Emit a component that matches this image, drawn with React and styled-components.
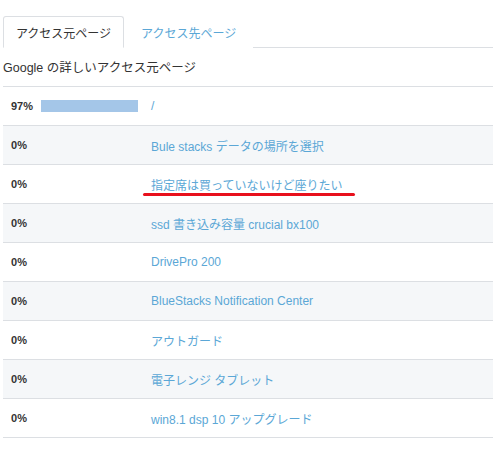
import React from "react";
import styled, { createGlobalStyle } from "styled-components";

const Global = createGlobalStyle`
  html, body { margin: 0; padding: 0; background: #fff; }
  body { font-family: "Liberation Sans", Arial, "Noto Sans CJK JP", sans-serif; color: #333; }
`;

const Page = styled.div`
  padding: 16px 0 0 3px;
`;

const Tabs = styled.div`
  display: flex;
  border-bottom: 1px solid #dcdfe3;
  height: 31px;
`;

const Tab = styled.div`
  box-sizing: border-box;
  height: 32px;
  padding: 0 ${p => (p.$active ? 0 : 16)}px;
  width: ${p => (p.$active ? "121px" : "auto")};
  display: flex;
  align-items: center;
  justify-content: center;
  white-space: nowrap;
  font-size: 12px;
  color: ${p => (p.$active ? "#333" : "#5ba7d6")};
  background: #fff;
  border: 1px solid ${p => (p.$active ? "#dcdfe3" : "transparent")};
  border-bottom-color: ${p => (p.$active ? "#fff" : "transparent")};
  border-radius: 3px 3px 0 0;
  margin-bottom: -1px;
`;

const Heading = styled.div`
  font-size: 12.5px;
  color: #333;
  height: 38px;
  line-height: 40px;
  border-bottom: 1px solid #dcdfe3;
`;

const Row = styled.div`
  position: relative;
  display: flex;
  align-items: center;
  height: 38px;
  border-bottom: 1px solid #dcdfe3;
  background: ${p => (p.$alt ? "#f5f7f9" : "#fff")};
`;

const Pct = styled.div`
  width: 38px;
  padding-left: 8px;
  box-sizing: border-box;
  font-size: 11px;
  font-weight: bold;
  color: #333;
`;

const BarCell = styled.div`
  width: 110px;
  height: 12px;
`;

const Bar = styled.div`
  height: 12px;
  background: #a4c6e8;
`;

const Link = styled.a`
  font-size: 12px;
  color: #5ba7d6;
  text-decoration: none;
`;

const Underline = styled.div`
  position: absolute;
  left: 140px;
  bottom: 7px;
  width: 212px;
  height: 3px;
  border-radius: 2px;
  background: #e8101c;
`;

const rows = [
  { pct: 97, text: "/" },
  { pct: 0, text: "Bule stacks データの場所を選択" },
  { pct: 0, text: "指定席は買っていないけど座りたい", mark: true },
  { pct: 0, text: "ssd 書き込み容量 crucial bx100" },
  { pct: 0, text: "DrivePro 200" },
  { pct: 0, text: "BlueStacks Notification Center" },
  { pct: 0, text: "アウトガード" },
  { pct: 0, text: "電子レンジ タブレット" },
  { pct: 0, text: "win8.1 dsp 10 アップグレード" },
];

export default function App() {
  return (
    <Page>
      <Global />
      <Tabs>
        <Tab $active>アクセス元ページ</Tab>
        <Tab>アクセス先ページ</Tab>
      </Tabs>
      <Heading>Google の詳しいアクセス元ページ</Heading>
      {rows.map((r, i) => (
        <Row key={i} $alt={i % 2 === 1}>
          <Pct>{r.pct}%</Pct>
          <BarCell>
            {r.pct > 0 && <Bar style={{ width: `${r.pct}px` }} />}
          </BarCell>
          <Link href="#">{r.text}</Link>
          {r.mark && <Underline />}
        </Row>
      ))}
    </Page>
  );
}
